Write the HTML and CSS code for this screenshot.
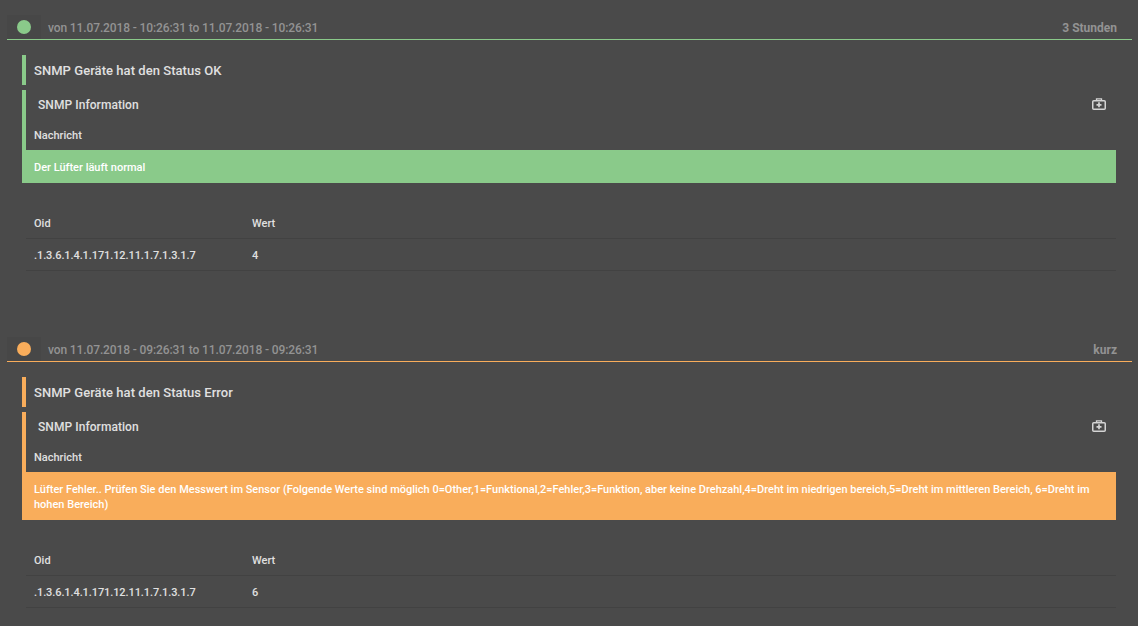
FILE: index.html
```html
<!DOCTYPE html>
<html lang="de">
<head>
<meta charset="utf-8">
<title>SNMP</title>
<link rel="stylesheet" href="styles.css">
</head>
<body>
<main class="timeline">
  <section class="event ok">
    <header class="event-head">
      <span class="dot-box"><span class="dot"></span></span>
      <span class="range">von 11.07.2018 - 10:26:31 to 11.07.2018 - 10:26:31</span>
      <span class="ago">3 Stunden</span>
    </header>
    <h2 class="status">SNMP Geräte hat den Status OK</h2>
    <div class="panel">
      <div class="panel-title">
        <h3>SNMP Information</h3>
        <svg class="kit" width="14" height="12" viewBox="0 0 14 12" aria-hidden="true"><path d="M4.500 2.500V0.800h5v1.700" fill="none" stroke="currentColor" stroke-width="1.300"/><rect x="0.750" y="2.750" width="12.500" height="8.500" rx="1" fill="none" stroke="currentColor" stroke-width="1.500"/><path d="M7 4.300v5M4.500 6.800h5" stroke="currentColor" stroke-width="1.700"/></svg>
      </div>
      <div class="label">Nachricht</div>
      <div class="alert">Der Lüfter läuft normal</div>
    </div>
    <table class="oids">
      <thead><tr><th>Oid</th><th>Wert</th></tr></thead>
      <tbody><tr><td>.1.3.6.1.4.1.171.12.11.1.7.1.3.1.7</td><td>4</td></tr></tbody>
    </table>
  </section>
  <section class="event warn">
    <header class="event-head">
      <span class="dot-box"><span class="dot"></span></span>
      <span class="range">von 11.07.2018 - 09:26:31 to 11.07.2018 - 09:26:31</span>
      <span class="ago">kurz</span>
    </header>
    <h2 class="status">SNMP Geräte hat den Status Error</h2>
    <div class="panel">
      <div class="panel-title">
        <h3>SNMP Information</h3>
        <svg class="kit" width="14" height="12" viewBox="0 0 14 12" aria-hidden="true"><path d="M4.500 2.500V0.800h5v1.700" fill="none" stroke="currentColor" stroke-width="1.300"/><rect x="0.750" y="2.750" width="12.500" height="8.500" rx="1" fill="none" stroke="currentColor" stroke-width="1.500"/><path d="M7 4.300v5M4.500 6.800h5" stroke="currentColor" stroke-width="1.700"/></svg>
      </div>
      <div class="label">Nachricht</div>
      <div class="alert">Lüfter Fehler.. Prüfen Sie den Messwert im Sensor (Folgende Werte sind möglich 0=Other,1=Funktional,2=Fehler,3=Funktion, aber keine Drehzahl,4=Dreht im niedrigen bereich,5=Dreht im mittleren Bereich, 6=Dreht im hohen Bereich)</div>
    </div>
    <table class="oids">
      <thead><tr><th>Oid</th><th>Wert</th></tr></thead>
      <tbody><tr><td>.1.3.6.1.4.1.171.12.11.1.7.1.3.1.7</td><td>6</td></tr></tbody>
    </table>
  </section>
</main>
</body>
</html>
```
FILE: styles.css
```css
* { box-sizing: border-box; }
html, body { margin: 0; }
body {
  background: #4a4a4a;
  color: #e0e0e0;
  font-family: Roboto, "Liberation Sans", sans-serif;
  font-size: 11px;
}
.timeline { padding: 15px 6px 0 7px; }
.event { --accent: #8aca8a; margin-bottom: 66px; }
.event.warn { --accent: #f9ad5b; margin-bottom: 0; }
.event-head {
  display: flex;
  align-items: center;
  height: 25px;
  border-bottom: 1px solid var(--accent);
}
.dot-box {
  display: flex;
  align-items: center;
  justify-content: center;
  width: 34px;
  height: 24px;
  background: #474747;
}
.dot { width: 14px; height: 14px; border-radius: 50%; background: var(--accent); }
.range { margin: 1px 0 0 7px; font-size: 12px; font-weight: 500; letter-spacing: -0.118px; color: #939393; }
.ago { margin: 1px 15px 0 auto; font-size: 12px; font-weight: 700; color: #939393; }
.status {
  margin: 15px 16px 0 15px;
  height: 30px;
  padding-left: 8px;
  border-left: 4px solid var(--accent);
  font-size: 13px;
  font-weight: 500;
  letter-spacing: 0.05px;
  line-height: 31px;
  color: #e0e0e0;
}
.panel {
  margin: 5px 16px 0 15px;
  border-left: 4px solid var(--accent);
}
.panel-title {
  display: flex;
  align-items: center;
  justify-content: space-between;
  height: 29px;
  padding: 0 10px 0 12px;
}
.panel-title h3 { margin: 0; font-size: 12px; font-weight: 500; letter-spacing: 0.06px; color: #e0e0e0; }
.kit { color: #d4d4d4; margin-top: -1px; }
.label {
  height: 31px;
  padding-left: 8px;
  font-size: 11px;
  font-weight: 500;
  line-height: 34px;
  color: #e0e0e0;
}
.alert {
  margin-left: -4px;
  padding: 10px 12px 8px;
  background: var(--accent);
  color: #fff;
  font-size: 11px;
  font-weight: 500;
  line-height: 15px;
}
.oids {
  width: 1090px;
  margin: 24px 0 0 19px;
  border-collapse: separate;
  border-spacing: 0;
  table-layout: fixed;
  font-size: 11px;
  font-weight: 500;
}
.oids th, .oids td {
  padding: 2px 8px 0;
  height: 32px;
  text-align: left;
  border-bottom: 1px solid #424242;
}
.oids th { font-weight: 500; color: #e0e0e0; }
.oids td:first-child { letter-spacing: -0.09px; }
.oids th:first-child, .oids td:first-child { width: 218px; }
```
